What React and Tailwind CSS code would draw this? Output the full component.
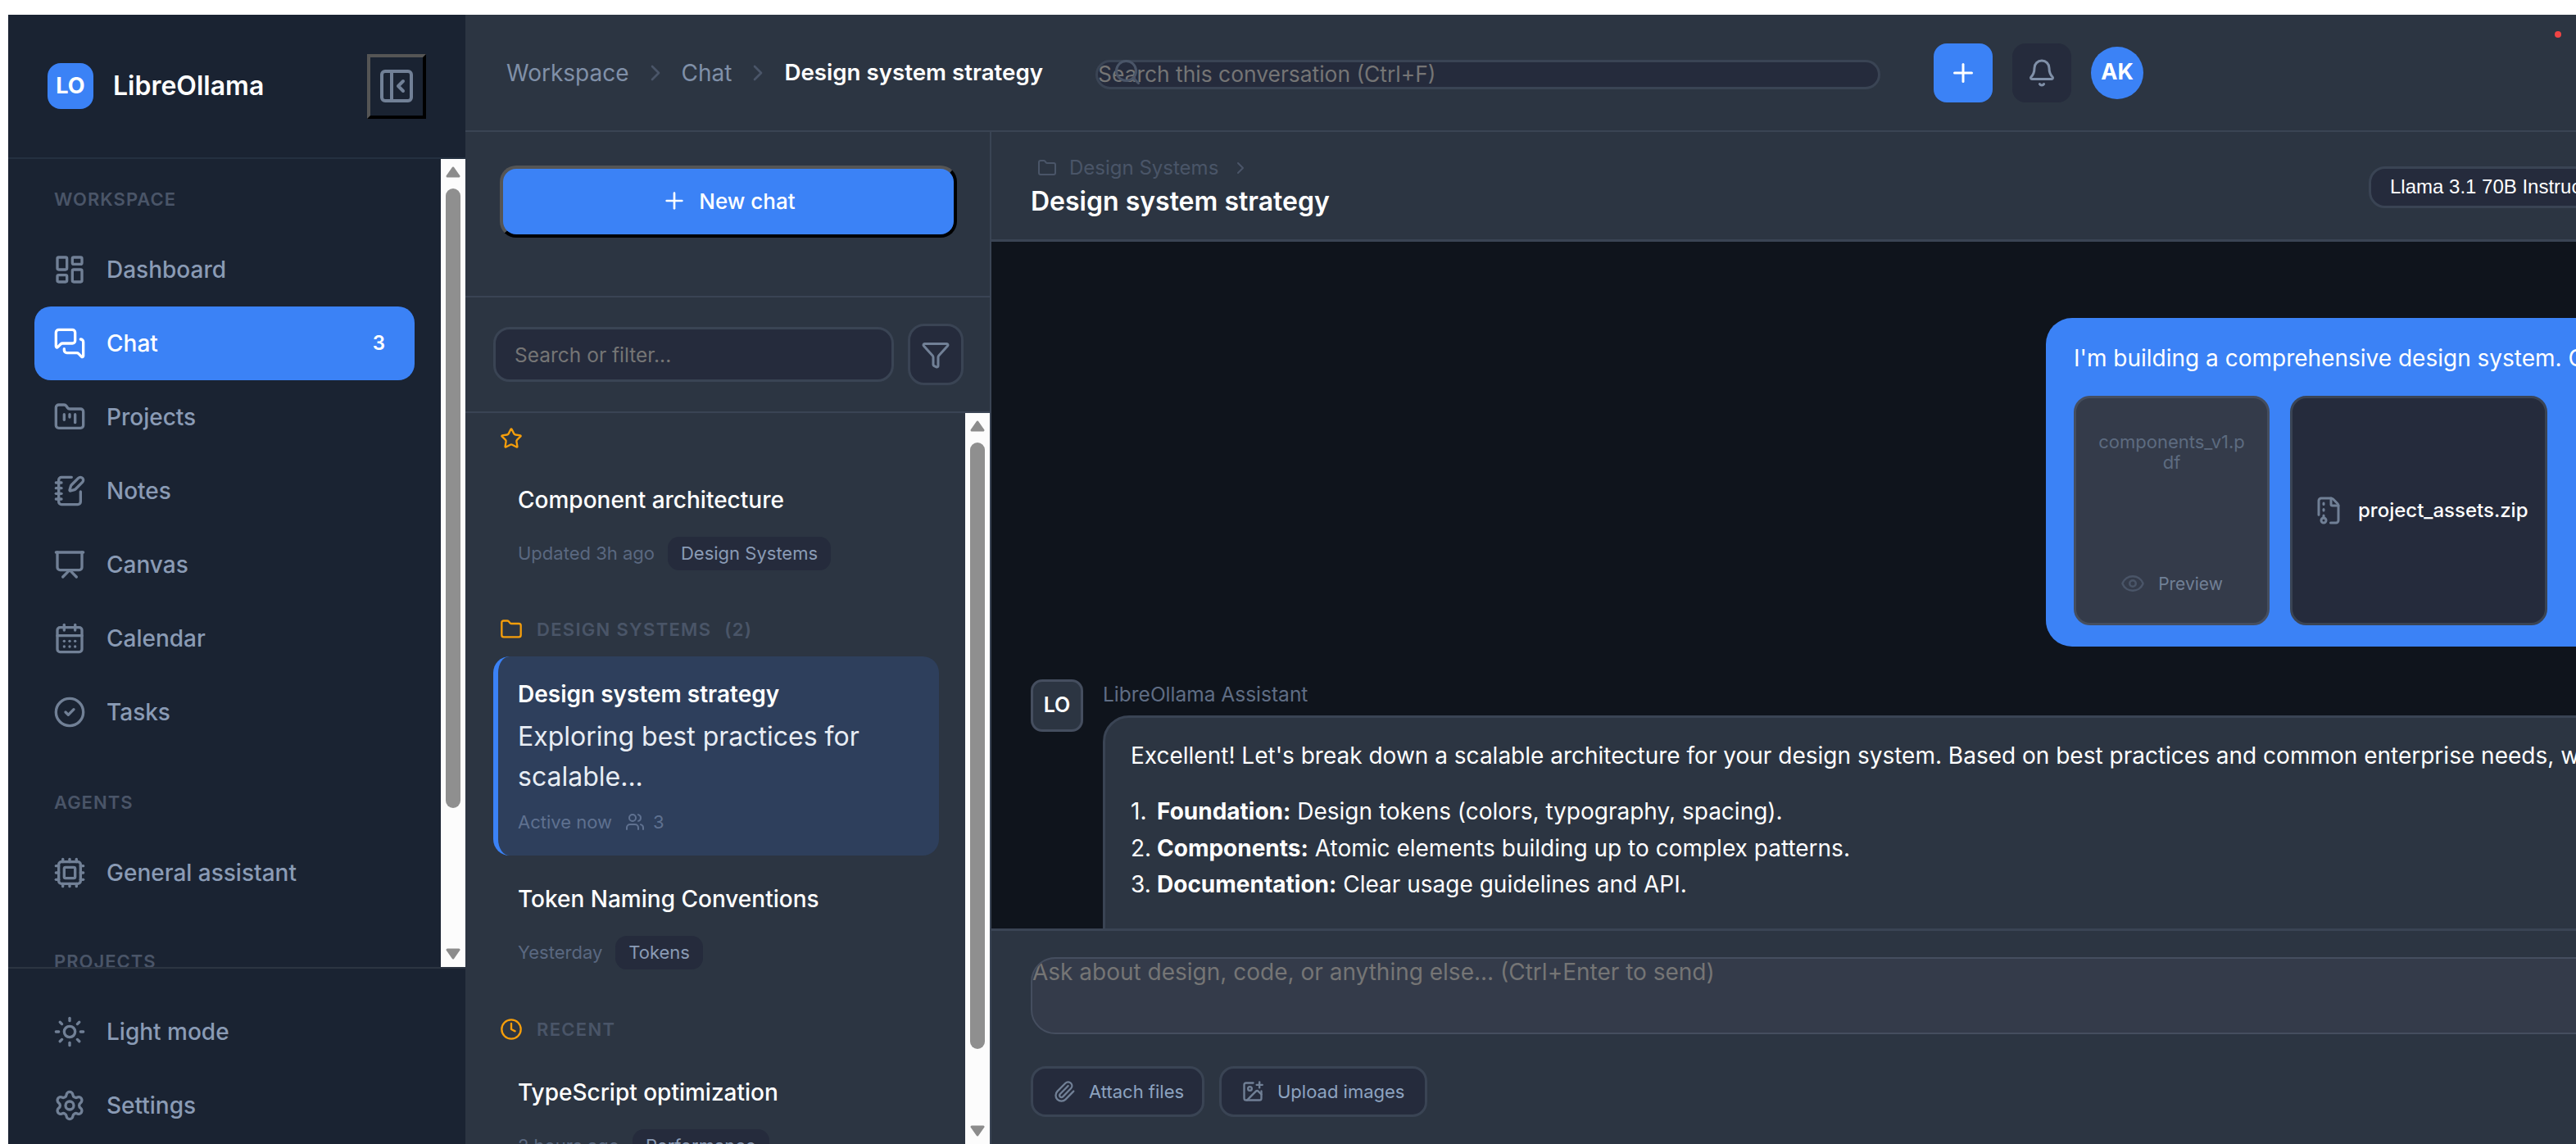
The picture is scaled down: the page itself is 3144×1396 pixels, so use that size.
import {
  Bell,
  CalendarDays,
  ChevronRight,
  CircleCheck,
  Clock,
  Cpu,
  Eye,
  FileArchive,
  Filter,
  Folder,
  FolderKanban,
  ImagePlus,
  LayoutDashboard,
  MessagesSquare,
  NotebookPen,
  PanelLeftClose,
  Paperclip,
  Plus,
  Presentation,
  Search,
  Settings,
  Star,
  Sun,
  Users,
} from "lucide-react";

function Scrollbar({ thumbClass }) {
  return (
    <div className="flex h-full w-[30px] shrink-0 flex-col items-center bg-[#fcfcfc] pt-[9px] pb-[9px]">
      <svg width="18" height="14" viewBox="0 0 18 14" className="shrink-0">
        <path d="M9 2 16 12H2Z" fill="#8c8c8c" stroke="#8c8c8c" strokeWidth="3" strokeLinejoin="round" />
      </svg>
      <div className={`w-[18px] shrink-0 rounded-full bg-[#8f8f8f] ${thumbClass}`} />
      <svg width="18" height="14" viewBox="0 0 18 14" className="mt-auto shrink-0">
        <path d="M9 12 16 2H2Z" fill="#8c8c8c" stroke="#8c8c8c" strokeWidth="3" strokeLinejoin="round" />
      </svg>
    </div>
  );
}

function NavItem({ icon: Icon, label, active, count }) {
  return (
    <div
      className={`mx-[32px] flex h-[90px] w-[464px] items-center gap-[25px] rounded-[20px] pl-[23px] pr-[36px] text-[28px] font-medium ${
        active ? "bg-[#3b82f6] text-white" : "text-[#8a9bb5]"
      }`}
    >
      <Icon size={40} strokeWidth={2} className={active ? "shrink-0 text-white" : "shrink-0 text-[#718096]"} />
      <span className="whitespace-nowrap">{label}</span>
      {count && <span className="ml-auto text-[24px] font-semibold">{count}</span>}
    </div>
  );
}

function NavLabel({ children, className }) {
  return (
    <div className={`h-[32px] pl-[56px] text-[22px] font-semibold uppercase leading-[32px] tracking-[1px] text-[#4a5568] ${className}`}>
      {children}
    </div>
  );
}

function Sidebar() {
  return (
    <aside className="flex h-full w-[558px] shrink-0 flex-col bg-[#1a2332]">
      <div className="flex h-[176px] shrink-0 items-center justify-between border-b-2 border-[#243040] pl-[48px] pr-[48px]">
        <div className="flex items-center gap-[24px]">
          <div className="flex h-[56px] w-[56px] items-center justify-center rounded-[16px] bg-[#3b82f6] text-[27px] font-bold text-white">
            LO
          </div>
          <span className="text-[32px] font-semibold text-white">LibreOllama</span>
        </div>
        <button className="flex h-[79px] w-[72px] items-center justify-center border-[4px] border-t-[#555] border-r-black border-b-black border-l-[#555]">
          <PanelLeftClose size={48} strokeWidth={2} className="text-[#718096]" />
        </button>
      </div>
      <div className="flex h-[986px] shrink-0 overflow-hidden">
        <nav className="min-w-0 flex-1 overflow-hidden pt-[33px]">
          <NavLabel className="mb-[25px]">Workspace</NavLabel>
          <NavItem icon={LayoutDashboard} label="Dashboard" />
          <NavItem icon={MessagesSquare} label="Chat" active count="3" />
          <NavItem icon={FolderKanban} label="Projects" />
          <NavItem icon={NotebookPen} label="Notes" />
          <NavItem icon={Presentation} label="Canvas" />
          <NavItem icon={CalendarDays} label="Calendar" />
          <NavItem icon={CircleCheck} label="Tasks" />
          <NavLabel className="mt-[49px] mb-[25px]">Agents</NavLabel>
          <NavItem icon={Cpu} label="General assistant" />
          <NavLabel className="mt-[47px]">Projects</NavLabel>
        </nav>
        <Scrollbar thumbClass="mt-[13px] h-[756px]" />
      </div>
      <div className="flex-1 border-t-2 border-[#2c3542] pt-[32px]">
        <NavItem icon={Sun} label="Light mode" />
        <NavItem icon={Settings} label="Settings" />
      </div>
    </aside>
  );
}

function TopBar() {
  return (
    <header className="flex h-[143px] shrink-0 items-center border-b-2 border-[#3a4454] pl-[50px]">
      <span className="text-[28px] text-[#8090a8]">Workspace</span>
      <ChevronRight size={32} className="mx-[16px] text-[#4a5568]" />
      <span className="text-[28px] text-[#8090a8]">Chat</span>
      <ChevronRight size={32} className="mx-[16px] text-[#4a5568]" />
      <span className="whitespace-nowrap text-[27.7px] font-semibold text-white">Design system strategy</span>
      <div className="relative ml-[64px] mt-[4px] shrink-0">
        <Search size={36} className="absolute left-[21px] top-[-3px] text-[#4a5568]" />
        <input
          readOnly
          placeholder="Search this conversation (Ctrl+F)"
          className="block h-[36px] w-[958px] rounded-full border-[3px] border-[#3a4454] bg-[#252b3c] p-0 text-[26.4px] placeholder:text-[#757575]"
        />
      </div>
      <button className="ml-[65px] flex h-[72px] w-[72px] shrink-0 items-center justify-center rounded-[16px] bg-[#3b82f6] text-white">
        <Plus size={36} />
      </button>
      <button className="ml-[24px] flex h-[72px] w-[72px] shrink-0 items-center justify-center rounded-[16px] bg-[#252b3c] text-[#8090a8]">
        <Bell size={36} />
      </button>
      <div className="ml-[24px] flex h-[64px] w-[64px] shrink-0 items-center justify-center rounded-full bg-[#3b82f6] text-[27px] font-bold text-white">
        AK
      </div>
    </header>
  );
}

function SectionHead({ icon: Icon, label, count, className }) {
  return (
    <div className={`flex h-[32px] items-center pl-[42px] ${className}`}>
      <Icon size={28} className="shrink-0 text-[#f59e0b]" />
      {label && (
        <span className="ml-[17px] whitespace-nowrap text-[22px] font-semibold uppercase tracking-[1.3px] text-[#4a5568]">
          {label}
        </span>
      )}
      {count && <span className="ml-[16px] text-[22px] font-semibold tracking-[1.3px] text-[#4a5568]">{count}</span>}
    </div>
  );
}

function ChatCard({ title, time, tag, className }) {
  return (
    <div className={`px-[64px] pt-[26px] ${className}`}>
      <div className="h-[40px] whitespace-nowrap text-[28px] font-medium leading-[40px] text-white">{title}</div>
      <div className="mt-[25px] flex h-[41px] items-center gap-[16px] text-[22px] text-[#5a6880]">
        <span className="whitespace-nowrap">{time}</span>
        <span className="flex h-[41px] items-center whitespace-nowrap rounded-[14px] bg-[#252b3c] px-[16px] text-[#8a9bb5]">{tag}</span>
      </div>
    </div>
  );
}

function ChatList() {
  return (
    <section className="flex h-full w-[642px] shrink-0 flex-col border-r-2 border-[#3a4454]">
      <div className="h-[202px] shrink-0 border-b-2 border-[#3a4454] pl-[42px] pt-[41px]">
        <button className="flex h-[88px] w-[558px] items-center justify-center gap-[14px] rounded-[20px] border-[4px] border-t-[#555] border-r-black border-b-black border-l-[#555] bg-[#3b82f6] pb-[2px] text-[26px] font-medium text-white">
          <Plus size={32} />
          New chat
        </button>
      </div>
      <div className="flex h-[141px] shrink-0 items-center gap-[17px] border-b-2 border-[#3a4454] pl-[34px]">
        <input
          readOnly
          placeholder="Search or filter..."
          className="h-[67px] w-[489px] rounded-[20px] border-[3px] border-[#3a4454] bg-[#252b3c] px-[23px] text-[24.5px] placeholder:text-[#757575]"
        />
        <button className="flex h-[75px] w-[68px] items-center justify-center rounded-[20px] border-[3px] border-[#3a4454] bg-[#252b3c] text-[#718096]">
          <Filter size={36} />
        </button>
      </div>
      <div className="flex min-h-0 flex-1 overflow-hidden">
        <div className="min-w-0 flex-1 overflow-hidden pt-[15px]">
          <SectionHead icon={Star} />
          <ChatCard title="Component architecture" time="Updated 3h ago" tag="Design Systems" className="mt-[13px] h-[158px]" />
          <SectionHead icon={Folder} label="Design Systems" count="(2)" className="mt-[30px]" />
          <div className="ml-[34px] mt-[17px] h-[243px] w-[544px] rounded-[20px] border-l-[6px] border-[#3b82f6] bg-[#2e3f5c] pl-[24px] pt-[26px]">
            <div className="h-[40px] text-[28px] font-semibold leading-[40px] text-white">Design system strategy</div>
            <div className="mt-[8px] w-[480px] text-[32px] leading-[48.5px] text-[#e8edf4]">Exploring best practices for scalable...</div>
            <div className="mt-[17px] flex h-[28px] items-center text-[22px] text-[#5f7190]">
              <span>Active now</span>
              <Users size={24} className="ml-[16px] mr-[10px]" />
              <span>3</span>
            </div>
          </div>
          <ChatCard title="Token Naming Conventions" time="Yesterday" tag="Tokens" className="mt-[7px] h-[158px]" />
          <SectionHead icon={Clock} label="Recent" className="mt-[31px]" />
          <ChatCard title="TypeScript optimization" time="2 hours ago" tag="Performance" className="mt-[15px] h-[158px]" />
        </div>
        <Scrollbar thumbClass="mt-[13px] h-[740px]" />
      </div>
    </section>
  );
}

function UserMessage() {
  return (
    <div className="ml-[1287px] h-[401px] w-[900px] rounded-[32px] bg-[#3b82f6] pl-[34px] pt-[27px]">
      <div className="whitespace-nowrap text-[28px] leading-[44px] text-white">
        I'm building a comprehensive design system. Can you help me structure it?
      </div>
      <div className="mt-[24px] flex gap-[25px]">
        <div className="flex h-[280px] w-[239px] flex-col items-center rounded-[20px] border-[3px] border-[#454e5f] bg-[#343b4a] px-[24px] pt-[41px]">
          <div className="break-all text-center text-[22px] leading-[25px] text-[#5d6b80]">components_v1.pdf</div>
          <div className="mt-auto mb-[32px] flex items-center gap-[16px] text-[21px] text-[#718096]">
            <Eye size={30} className="text-[#4a5568]" />
            Preview
          </div>
        </div>
        <div className="flex h-[280px] w-[314px] items-center gap-[18px] rounded-[20px] border-[3px] border-[#3a4454] bg-[#252b3c] pl-[26px]">
          <FileArchive size={36} className="shrink-0 text-[#718096]" />
          <span className="whitespace-nowrap text-[24px] font-medium text-white">project_assets.zip</span>
        </div>
      </div>
    </div>
  );
}

function ListLine({ num, head, children }) {
  return (
    <li className="flex whitespace-pre">
      <span className="w-[32px] shrink-0">{num}.</span>
      <span>
        <b>{head}</b> {children}
      </span>
    </li>
  );
}

function AssistantMessage() {
  return (
    <div className="ml-[48px] mt-[40px] flex gap-[24px]">
      <div className="flex h-[64px] w-[64px] shrink-0 items-center justify-center rounded-[14px] border-[3px] border-[#454e5f] bg-[#2c3542] text-[25px] font-semibold text-white">
        LO
      </div>
      <div className="w-[1900px] shrink-0 pt-[2px]">
        <div className="h-[32px] text-[24.5px] leading-[32px] text-[#5f6d84]">LibreOllama Assistant</div>
        <div className="mt-[10px] rounded-tl-[32px] border-[3px] border-[#3a4454] bg-[#2c3542] pl-[31px] pt-[24px] text-[28px] leading-[44.8px] text-white">
          <p className="whitespace-nowrap">
            Excellent! Let's break down a scalable architecture for your design system. Based on best practices and common enterprise needs, we recommend three layers.
          </p>
          <ol className="mt-[23px]">
            <ListLine num="1" head="Foundation:">Design tokens (colors, typography, spacing).</ListLine>
            <ListLine num="2" head="Components:">Atomic elements building up to complex patterns.</ListLine>
            <ListLine num="3" head="Documentation:">Clear usage guidelines and API.</ListLine>
          </ol>
          <div className="h-[60px]" />
        </div>
      </div>
    </div>
  );
}

function Conversation() {
  return (
    <section className="flex h-full min-w-0 flex-1 flex-col overflow-hidden">
      <div className="flex h-[134px] shrink-0 items-center overflow-hidden border-b-[3px] border-[#3a4454] pl-[48px]">
        <div className="w-[1633px] shrink-0 pt-[2px]">
          <div className="flex h-[34px] items-center pl-[8px] text-[24px] text-[#4a5568]">
            <Folder size={24} className="mr-[15px]" />
            Design Systems
            <ChevronRight size={24} className="ml-[15px]" />
          </div>
          <div className="mt-[2px] text-[32px] font-semibold leading-[44px] text-white">Design system strategy</div>
        </div>
        <div className="mt-[3px] flex h-[51px] w-[400px] shrink-0 items-center whitespace-nowrap rounded-[20px] border-[3px] border-[#3a4454] bg-[#252b3c] pl-[23px] text-[24px] text-white [font-family:'Liberation_Sans',sans-serif]">
          Llama 3.1 70B Instruct
        </div>
      </div>
      <div className="min-h-0 flex-1 overflow-hidden bg-[#0f141c] pt-[93px]">
        <UserMessage />
        <AssistantMessage />
      </div>
      <div className="h-[263px] shrink-0 border-t-[3px] border-[#3a4454] pl-[48px] pt-[32px]">
        <textarea
          readOnly
          placeholder="Ask about design, code, or anything else... (Ctrl+Enter to send)"
          className="block h-[94px] w-[2000px] resize-none rounded-[30px] border-2 border-[#454e5f] bg-[#343b4a] p-0 text-[28px] leading-[32px] placeholder:text-[#757575]"
        />
        <div className="mt-[39px] flex gap-[18px]">
          <button className="flex h-[62px] w-[212px] items-center gap-[16px] rounded-[18px] border-[3px] border-[#3a4454] bg-[#252b3c] pl-[24px] text-[22px] text-[#8da3c0]">
            <Paperclip size={28} className="shrink-0 text-[#718096]" />
            Attach files
          </button>
          <button className="flex h-[62px] w-[254px] items-center gap-[16px] rounded-[18px] border-[3px] border-[#3a4454] bg-[#252b3c] pl-[24px] text-[22px] text-[#8da3c0]">
            <ImagePlus size={28} className="shrink-0 text-[#718096]" />
            Upload images
          </button>
        </div>
      </div>
    </section>
  );
}

export default function App() {
  return (
    <div className="h-[1396px] w-[3144px] overflow-hidden bg-white pl-[10px] pt-[18px] [font-family:Inter,sans-serif]">
      <div className="relative flex h-[1378px] w-[3134px]">
        <Sidebar />
        <main className="flex h-full min-w-0 flex-1 flex-col bg-[#2c3542]">
          <TopBar />
          <div className="flex min-h-0 flex-1">
            <ChatList />
            <Conversation />
          </div>
        </main>
        <span className="absolute left-[3108px] top-[20px] h-[8px] w-[8px] rounded-full bg-[#ef4444]" />
      </div>
    </div>
  );
}
